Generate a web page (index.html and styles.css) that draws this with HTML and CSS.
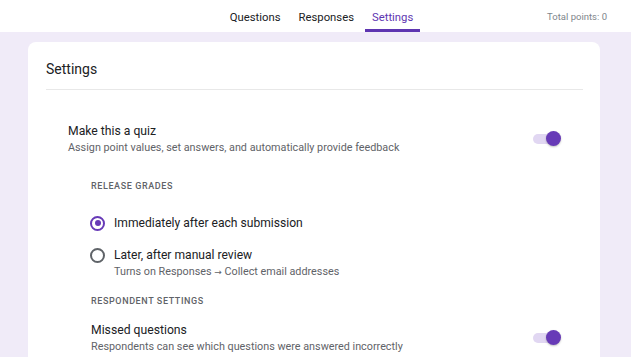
FILE: index.html
```html
<!DOCTYPE html>
<html lang="en">
<head>
    <meta charset="UTF-8">
    <meta name="viewport" content="width=device-width, initial-scale=1.0">
    <title>Form Settings</title>
    <link rel="stylesheet" href="styles.css">
</head>
<body>

    <div class="top-bar">
        <div></div>
        <div class="tabs">
            <div class="tab">Questions</div>
            <div class="tab">Responses</div>
            <div class="tab active">Settings</div>
        </div>
        <div class="total-points">Total points: 0</div>
    </div>

    <div class="page">
        <div class="card">
            <div class="card-title">Settings</div>

            <div class="section">
                <div class="setting-row">
                    <div>
                        <div class="setting-name">Make this a quiz</div>
                        <div class="setting-desc">Assign point values, set answers, and automatically provide feedback</div>
                    </div>
                    <div class="toggle on"><span class="thumb"></span></div>
                </div>

                <div class="sub-section">
                    <div class="group-label">RELEASE GRADES</div>

                    <div class="radio-row first">
                        <span class="radio checked"></span>
                        <span class="radio-label">Immediately after each submission</span>
                    </div>
                    <div class="radio-row">
                        <span class="radio"></span>
                        <span class="radio-label">Later, after manual review</span>
                    </div>
                    <div class="radio-note">Turns on Responses <span class="arrow">&rarr;</span> Collect email addresses</div>

                    <div class="group-label respondent">RESPONDENT SETTINGS</div>

                    <div class="setting-row missed">
                        <div>
                            <div class="setting-name">Missed questions</div>
                            <div class="setting-desc">Respondents can see which questions were answered incorrectly</div>
                        </div>
                        <div class="toggle on"><span class="thumb"></span></div>
                    </div>
                </div>
            </div>
        </div>
    </div>

</body>
</html>
```

FILE: styles.css
```css
body {
    margin: 0;
    font-family: Roboto, "Liberation Sans", sans-serif;
    color: #202124;
    background: #f0ebf8;
}

.top-bar {
    height: 32px;
    background: white;
    display: grid;
    grid-template-columns: 1fr auto 1fr;
    align-items: center;
}
.tabs {
    display: flex;
    gap: 4px;
    height: 32px;
    margin-left: 12px;
}
.tab {
    padding: 6px 7px 0;
    font-size: 11.3px;
    line-height: 23px;
    border-bottom: 3px solid transparent;
    color: #202124;
}
.tab.active {
    color: #5e35b1;
    border-bottom-color: #5e35b1;
}
.total-points {
    text-align: right;
    padding-right: 24px;
    padding-top: 1px;
    font-size: 9.5px;
    color: #80868b;
}

.page {
    padding: 10px 31px 0 28px;
}
.card {
    background: white;
    border-radius: 8px;
    padding: 0 17px 0 18px;
    height: 400px;
}
.card-title {
    height: 47px;
    line-height: 54px;
    font-size: 14px;
    border-bottom: 1px solid #e8e8e8;
}

.section {
    padding: 32px 23px 0 22px;
}
.setting-row {
    display: flex;
    align-items: center;
    justify-content: space-between;
}
.setting-name {
    font-size: 12.2px;
    line-height: 18px;
}
.setting-desc {
    font-size: 10.8px;
    line-height: 16px;
    color: #5f6368;
}

.toggle {
    width: 27px;
    height: 10px;
    border-radius: 5px;
    background: #e1d7f2;
    position: relative;
}
.toggle .thumb {
    position: absolute;
    right: -1px;
    top: -3px;
    width: 15px;
    height: 15px;
    border-radius: 50%;
    background: #673ab7;
    box-shadow: 0 1px 2px rgba(0, 0, 0, 0.25);
}

.sub-section {
    padding-left: 23px;
}
.group-label {
    margin-top: 23px;
    font-size: 9px;
    line-height: 14px;
    font-weight: 500;
    letter-spacing: 0.6px;
    color: #5f6368;
}
.group-label.respondent {
    margin-top: 15px;
}

.radio-row {
    display: flex;
    align-items: center;
    gap: 9px;
    height: 20px;
    margin-top: 12px;
}
.radio-row.first {
    margin-top: 20px;
}
.radio {
    width: 11px;
    height: 11px;
    border: 2px solid #5f6368;
    border-radius: 50%;
    position: relative;
    margin-left: -1px;
}
.radio.checked {
    border-color: #673ab7;
}
.radio.checked::after {
    content: "";
    position: absolute;
    left: 2.5px;
    top: 2.5px;
    width: 6px;
    height: 6px;
    border-radius: 50%;
    background: #673ab7;
}
.radio-label {
    font-size: 12.1px;
}
.radio-note {
    padding-left: 23px;
    font-size: 10.8px;
    line-height: 14px;
    color: #5f6368;
}
.arrow {
    font-family: "DejaVu Sans", sans-serif;
    font-size: 9px;
}

.setting-row.missed {
    margin-top: 13px;
    margin-left: -23px;
    padding-left: 23px;
}
```
